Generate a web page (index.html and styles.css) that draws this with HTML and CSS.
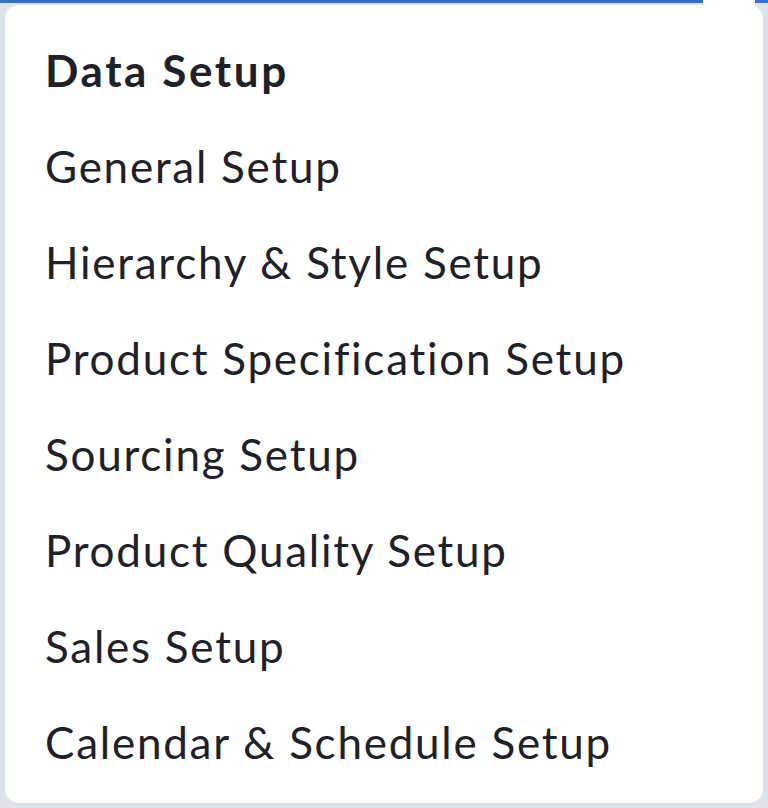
FILE: index.html
```html
<!DOCTYPE html>
<html>
<head>
<meta charset="utf-8">
<link rel="stylesheet" href="styles.css">
</head>
<body>
<div class="topbar"><span class="notch"></span></div>
<div class="card">
  <ul class="menu">
    <li class="menu-item menu-title">Data Setup</li>
    <li class="menu-item">General Setup</li>
    <li class="menu-item">Hierarchy &amp; Style Setup</li>
    <li class="menu-item">Product Specification Setup</li>
    <li class="menu-item">Sourcing Setup</li>
    <li class="menu-item">Product Quality Setup</li>
    <li class="menu-item">Sales Setup</li>
    <li class="menu-item">Calendar &amp; Schedule Setup</li>
  </ul>
</div>
</body>
</html>
```
FILE: styles.css
```css
html, body {
  margin: 0;
  padding: 0;
}
body {
  width: 768px;
  height: 808px;
  background: #dde2eb;
  position: relative;
  overflow: hidden;
  font-family: Lato, "Open Sans", sans-serif;
}
.topbar {
  position: absolute;
  left: 0;
  top: 0;
  width: 768px;
  height: 3px;
  background: #2f6fd0;
}
.notch {
  position: absolute;
  left: 703px;
  top: 0;
  width: 52px;
  height: 6px;
  background: #ffffff;
}
.card {
  position: relative;
  margin: 5px 5px 0 5px;
  height: 798px;
  background: #ffffff;
  border-radius: 14px;
  box-sizing: border-box;
  padding: 17px 0 0 40px;
}
.menu {
  list-style: none;
  margin: 0;
  padding: 0;
}
.menu-item {
  font-size: 44px;
  line-height: 96px;
  height: 96px;
  color: #1f2128;
  font-weight: 400;
  letter-spacing: 1.75px;
  white-space: nowrap;
}
.menu-title {
  font-weight: 700;
  letter-spacing: 2.6px;
}
```
